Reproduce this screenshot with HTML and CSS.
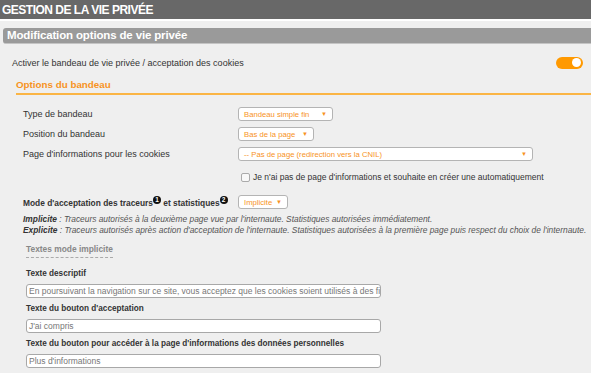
FILE: index.html
```html
<!DOCTYPE html>
<html lang="fr">
<head>
    <meta charset="UTF-8">
    <title>Gestion de la vie privée</title>
    <link rel="stylesheet" href="styles.css">
</head>
<body>
    <div class="page-title">GESTION DE LA VIE PRIVÉE</div>

    <div class="panel">
        <h2 class="panel-title">Modification options de vie privée</h2>

        <div class="toggle-row">
            <span>Activer le bandeau de vie privée / acceptation des cookies</span>
            <span class="toggle"><span class="knob"></span></span>
        </div>

        <h3 class="sub-title">Options du bandeau</h3>

        <div class="form">
            <div class="field-row">
                <label>Type de bandeau</label>
                <div class="select w-type">Bandeau simple fin <span class="arrow">▼</span></div>
            </div>
            <div class="field-row">
                <label>Position du bandeau</label>
                <div class="select w-pos">Bas de la page <span class="arrow">▼</span></div>
            </div>
            <div class="field-row">
                <label>Page d'informations pour les cookies</label>
                <div class="select w-page">-- Pas de page (redirection vers la CNIL) <span class="arrow">▼</span></div>
            </div>
            <div class="check-row">
                <span class="checkbox"></span>
                <span>Je n'ai pas de page d'informations et souhaite en créer une automatiquement</span>
            </div>
            <div class="field-row mode-row">
                <label class="strong">Mode d'acceptation des traceurs<sup class="badge">1</sup> et statistiques<sup class="badge">2</sup></label>
                <div class="select w-mode">Implicite <span class="arrow">▼</span></div>
            </div>
            <div class="help">
                <p><b>Implicite</b> : Traceurs autorisés à la deuxième page vue par l'internaute. Statistiques autorisées immédiatement.</p>
                <p><b>Explicite</b> : Traceurs autorisés après action d'acceptation de l'internaute. Statistiques autorisées à la première page puis respect du choix de l'internaute.</p>
            </div>

            <div class="texts">
                <div class="legend">Textes mode implicite</div>
                <div class="text-field first">
                    <label>Texte descriptif</label>
                    <div class="input">En poursuivant la navigation sur ce site, vous acceptez que les cookies soient utilisés à des fins de mesure d'audience</div>
                </div>
                <div class="text-field">
                    <label>Texte du bouton d'acceptation</label>
                    <div class="input">J'ai compris</div>
                </div>
                <div class="text-field">
                    <label>Texte du bouton pour accéder à la page d'informations des données personnelles</label>
                    <div class="input">Plus d'informations</div>
                </div>
            </div>
        </div>
    </div>
</body>
</html>
```

FILE: styles.css
```css
body {
    margin: 0;
    background: #efefef;
    font-family: 'Liberation Sans', Arial, sans-serif;
    font-size: 9px;
    color: #333;
    overflow: hidden;
}

.page-title {
    height: 19px;
    line-height: 20px;
    padding-left: 2px;
    background: #686868;
    border-bottom: 2px solid #fff;
    color: #fff;
    font-size: 12px;
    font-weight: bold;
    letter-spacing: -0.5px;
}

.panel {
    padding: 7px 0 0 3px;
}

.panel-title {
    margin: 0;
    height: 15px;
    line-height: 15px;
    padding-left: 4px;
    background: #9a9a9a;
    border-bottom: 1px solid #c4c4c4;
    border-radius: 3px 0 0 3px;
    color: #fff;
    font-size: 11.5px;
    font-weight: bold;
    letter-spacing: -0.15px;
}

.toggle-row {
    display: flex;
    justify-content: space-between;
    align-items: center;
    padding: 12px 8px 0 9px;
    height: 13px;
}

.toggle {
    display: flex;
    justify-content: flex-end;
    align-items: center;
    width: 27px;
    height: 12px;
    padding: 0 2px;
    box-sizing: border-box;
    background: #ff9900;
    border-radius: 6px;
}

.knob {
    width: 9px;
    height: 9px;
    background: #fff;
    border-radius: 50%;
}

.sub-title {
    margin: 10px 0 0 13px;
    padding-bottom: 3px;
    border-bottom: 2px solid #fbb545;
    color: #f7931e;
    font-size: 9.8px;
    font-weight: bold;
}

.form {
    padding: 12px 0 0 20px;
}

.field-row {
    display: flex;
    align-items: center;
    height: 14px;
    margin-bottom: 6px;
}

.field-row label {
    width: 215px;
    flex-shrink: 0;
    white-space: nowrap;
}

.strong {
    font-weight: bold;
    font-size: 8.4px;
}

.select {
    display: flex;
    justify-content: space-between;
    align-items: center;
    height: 14px;
    padding: 0 5px;
    box-sizing: border-box;
    background: #fff;
    border: 1px solid #b4b4b4;
    border-radius: 3px;
    color: #f7931e;
    font-size: 7.7px;
}

.arrow {
    font-size: 6px;
}

.w-type { width: 95px; }
.w-pos { width: 76px; }
.w-page { width: 295px; }
.w-mode { width: 50px; }

.check-row {
    display: flex;
    align-items: center;
    gap: 3px;
    margin: 11px 0 13px 218px;
    font-size: 8.5px;
}

.checkbox {
    width: 7px;
    height: 7px;
    border: 1px solid #aaa;
    border-radius: 2px;
    background: #f8f8f8;
}

.mode-row {
    margin-bottom: 5px;
}

.badge {
    display: inline-block;
    width: 8px;
    height: 8px;
    line-height: 8px;
    border-radius: 50%;
    background: #111;
    color: #fff;
    font-size: 6.5px;
    text-align: center;
    vertical-align: 4px;
}

.help p {
    margin: 0;
    font-size: 8.4px;
    font-style: italic;
    color: #555;
    white-space: nowrap;
    line-height: 11px;
}

.help b {
    color: #333;
}

.texts {
    padding: 8px 0 0 3px;
}

.legend {
    display: inline-block;
    padding-bottom: 3px;
    border-bottom: 1px dashed #aaa;
    color: #888;
    font-size: 8.4px;
    font-weight: bold;
}

.text-field label {
    display: block;
    margin: 6px 0 5px;
    line-height: 10px;
    font-size: 8.2px;
    font-weight: bold;
}

.text-field.first label {
    margin-top: 11px;
}

.input {
    width: 355px;
    height: 14px;
    line-height: 12px;
    padding: 0 2px;
    box-sizing: border-box;
    overflow: hidden;
    white-space: nowrap;
    background: #fff;
    border: 1px solid #a8a8a8;
    border-radius: 3px;
    color: #777;
    font-size: 8.5px;
}
```
